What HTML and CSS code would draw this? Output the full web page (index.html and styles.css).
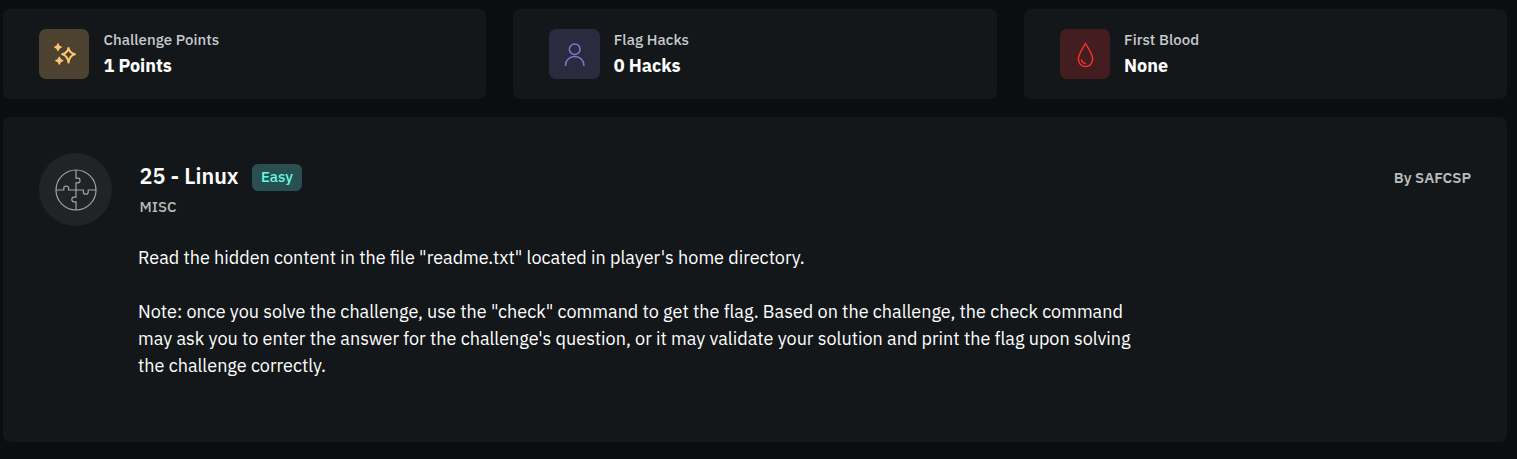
FILE: index.html
```html
<!DOCTYPE html>
<html lang="en">
<head>
<meta charset="utf-8">
<title>25 - Linux</title>
<link rel="stylesheet" href="styles.css">
</head>
<body>
<main class="page">
  <section class="stats">
    <article class="card stat">
      <div class="stat-icon points">
        <svg width="50" height="50" viewBox="0 0 50 50" fill="none" stroke="currentColor" stroke-width="2" stroke-linejoin="round">
          <path d="M29.5 19Q30.5 24 36 25.2Q30.5 26.4 29.5 33.5Q28.5 26.4 23.2 25.2Q28.5 24 29.5 19Z"/>
          <path stroke-width="1.3" fill="currentColor" d="M19 14.8Q19.6 17.6 22.3 18.2Q19.6 18.8 19 21.6Q18.4 18.8 15.7 18.2Q18.4 17.6 19 14.8ZM20.3 28.2Q20.9 31 23.8 31.6Q20.9 32.2 20.3 35Q19.7 32.2 16.8 31.6Q19.7 31 20.3 28.2Z"/>
        </svg>
      </div>
      <div class="stat-text"><span class="label">Challenge Points</span><strong class="value">1 Points</strong></div>
    </article>
    <article class="card stat">
      <div class="stat-icon hacks">
        <svg width="50" height="50" viewBox="0 0 50 50" fill="none" stroke="currentColor" stroke-width="1.5">
          <circle cx="25.7" cy="20.3" r="5.3"/>
          <path d="M16.5 37V36.5C16.5 31.4 20.5 27.5 25.7 27.5S34.9 31.4 34.9 36.5V37"/>
        </svg>
      </div>
      <div class="stat-text"><span class="label">Flag Hacks</span><strong class="value">0 Hacks</strong></div>
    </article>
    <article class="card stat">
      <div class="stat-icon blood">
        <svg width="50" height="50" viewBox="0 0 50 50" fill="none" stroke="currentColor" stroke-width="1.5" stroke-linecap="round" stroke-linejoin="round">
          <path d="M25.5 14.5C23.3 18 18.4 25.2 18.4 30.1C18.4 34.4 21.5 37.5 25.5 37.5S32.6 34.4 32.6 30.1C32.6 25.2 27.7 18 25.5 14.5Z"/>
          <path d="M21.6 30.8C22 32.8 23.4 34.1 25.3 34.4"/>
        </svg>
      </div>
      <div class="stat-text"><span class="label">First Blood</span><strong class="value">None</strong></div>
    </article>
  </section>
  <section class="card challenge">
    <div class="avatar">
      <svg width="44" height="44" viewBox="0 0 44 44" fill="none" stroke="currentColor" stroke-width="1.2">
        <circle cx="22" cy="22" r="20"/>
        <path d="M22 2V10.2H24.2C26.6 10.2 26.6 14.9 24.2 14.9H22V29.2H19.8C17.2 29.2 17.2 33.8 19.8 33.8H22V42"/>
        <path d="M2 22H9.8V20C9.8 17.4 14.6 17.4 14.6 20V22H29.4V24.2C29.4 26.8 34.2 26.8 34.2 24.2V22H42"/>
      </svg>
    </div>
    <div class="content">
      <header class="heading">
        <div class="title-row"><h1 class="title">25 - Linux</h1><span class="badge">Easy</span></div>
        <span class="author">By SAFCSP</span>
      </header>
      <div class="category">MISC</div>
      <div class="description">
        <p class="line read">Read the hidden content in the file "readme.txt" located in player's home directory.</p>
        <p class="line">Note: once you solve the challenge, use the "check" command to get the flag. Based on the challenge, the check command</p>
        <p class="line">may ask you to enter the answer for the challenge's question, or it may validate your solution and print the flag upon solving</p>
        <p class="line">the challenge correctly.</p>
      </div>
    </div>
  </section>
</main>
</body>
</html>
```
FILE: styles.css
```css
* { box-sizing: border-box; }
body {
  margin: 0;
  height: 459px;
  overflow: hidden;
  background: #0c0d0f;
  color: #fff;
  font-family: "IBM Plex Sans", Roboto, "Noto Sans", sans-serif;
}
.page { padding: 9px 10px 0 3px; }
.stats {
  display: grid;
  grid-template-columns: repeat(3, 1fr);
  gap: 27px;
  margin-bottom: 18px;
}
.card { background: #131719; border-radius: 7px; }
.stat { display: flex; height: 90px; padding: 20px 36px; gap: 14px; }
.stat-icon { width: 50.4px; height: 50px; border-radius: 7px; flex: none; }
.stat-icon svg { display: block; }
.points { background: #4d422f; color: #ffc470; }
.hacks { background: #2b2b40; color: #7d79d0; }
.blood { background: #431d20; color: #f5302f; }
.stat-text { display: flex; flex-direction: column; white-space: nowrap; }
.label { font-size: 15px; font-weight: 500; letter-spacing: 0.06px; line-height: 22px; color: #c9cbd0; }
.value { font-size: 18px; font-weight: 700; line-height: 27px; margin-top: 1px; }
.challenge { display: flex; height: 325px; padding: 36px; gap: 27.5px; }
.avatar {
  display: grid;
  place-items: center;
  flex: none;
  width: 73px;
  height: 73px;
  border-radius: 50%;
  background: #202427;
  color: #a2a4a5;
}
.content { flex: 1; white-space: nowrap; }
.heading { display: flex; justify-content: space-between; align-items: center; height: 28px; margin-top: 10px; }
.title-row { display: flex; align-items: center; gap: 13.5px; }
.title { margin: 0; width: 99px; font-size: 21.6px; font-weight: 600; line-height: 28px; padding-bottom: 2px; }
.badge {
  width: 50px;
  height: 27px;
  border-radius: 6px;
  background: #2a4f50;
  color: #66fbe9;
  font-size: 15px;
  font-weight: 500;
  line-height: 26px;
  text-align: center;
}
.author { font-size: 15px; font-weight: 600; color: #b9bbbc; }
.category { margin-top: 5px; font-size: 15px; font-weight: 500; line-height: 22px; color: #b9bbbc; }
.description { margin: 26px 0 0 -1.5px; font-size: 18px; line-height: 27px; }
.line { margin: 0; }
.read { margin-bottom: 27px; }
```
